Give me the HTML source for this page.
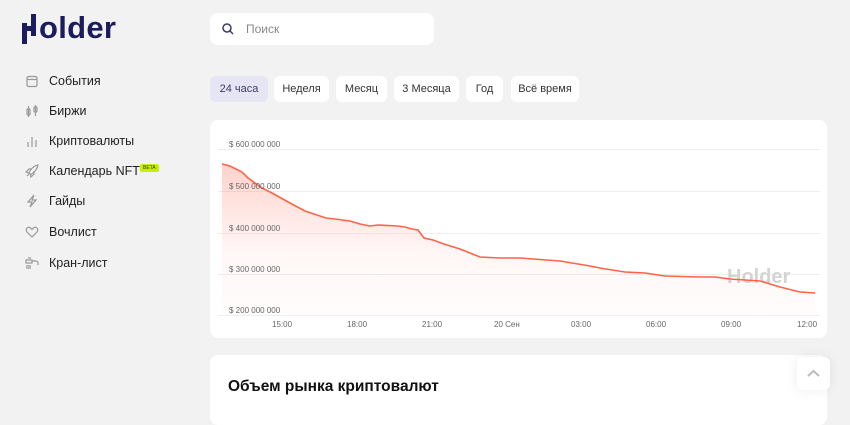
<!DOCTYPE html>
<html><head><meta charset="utf-8"><style>
body{margin:0;width:850px;height:413px;background:#f2f2f2;font-family:"Liberation Sans",sans-serif;overflow:hidden;position:relative}
.abs{position:absolute}
.logo{left:22px;top:12px;height:34px;color:#1b1b5e;font-weight:bold;font-size:31px;letter-spacing:0.3px}
.nav{left:25px;font-size:12.5px;color:#222}
.nav span.i{position:absolute;left:0;top:0;width:14px;height:14px}
.nav span.t{position:absolute;left:24px;top:0;white-space:nowrap}
.search{left:210px;top:13px;width:224px;height:32px;background:#fff;border-radius:8px}
.tab{top:76px;height:26px;background:#fff;border-radius:6px;font-size:11px;color:#333;text-align:center;line-height:26px}
.card{left:210px;top:120px;width:617px;height:218px;background:#fff;border-radius:8px}
.card2{left:210px;top:355px;width:617px;height:70px;background:#fff;border-radius:8px}
.yl{font-size:8px;color:#666;left:229px}
.xl{font-size:8px;color:#666;top:320px}
</style></head><body>
<div class="abs logo">
<svg width="16" height="32" style="position:absolute;left:0;top:2px"><rect x="0" y="9" width="5" height="21" fill="#1b1b5e"/><rect x="9" y="0" width="5" height="22" fill="#1b1b5e"/><rect x="0" y="12" width="14" height="5" fill="#1b1b5e"/></svg>
<span style="position:absolute;left:17px;top:-2px">older</span></div>

<div class="abs nav" style="top:74px"><span class="i"><svg width="14" height="14" fill="none" stroke="#999" stroke-width="1.2"><rect x="2" y="2.5" width="10" height="10" rx="1.5"/><line x1="2" y1="5.5" x2="12" y2="5.5"/></svg></span><span class="t">События</span></div>
<div class="abs nav" style="top:104px"><span class="i"><svg width="14" height="14" fill="none" stroke="#999" stroke-width="1.2"><rect x="2" y="5" width="3" height="6" rx="1"/><rect x="9" y="3" width="3" height="5" rx="1"/><line x1="3.5" y1="2" x2="3.5" y2="13"/><line x1="10.5" y1="1" x2="10.5" y2="12"/></svg></span><span class="t">Биржи</span></div>
<div class="abs nav" style="top:134px"><span class="i"><svg width="14" height="14" stroke="#999" stroke-width="1.2"><line x1="3" y1="8" x2="3" y2="13"/><line x1="7" y1="3" x2="7" y2="13"/><line x1="11" y1="6" x2="11" y2="13"/></svg></span><span class="t">Криптовалюты</span></div>
<div class="abs nav" style="top:164px"><span class="i"><svg width="14" height="14" fill="none" stroke="#999" stroke-width="1.2"><path d="M13 1C8 2 5 6 4 9l1.5 1.5C8 9.5 12 6 13 1z"/><path d="M4 9L1 8l3-3h3M5.5 10.5L6 13l3-3V7"/><path d="M2 12l2-2"/></svg></span><span class="t">Календарь NFT</span>
<span style="position:absolute;left:115px;top:0;background:#c6f000;font-size:5px;padding:1px 3px;border-radius:2px;color:#333">BETA</span></div>
<div class="abs nav" style="top:194px"><span class="i"><svg width="14" height="14" fill="none" stroke="#999" stroke-width="1.2"><path d="M9 1L3 8h4l-2 5 6-7H7z"/></svg></span><span class="t">Гайды</span></div>
<div class="abs nav" style="top:225px"><span class="i"><svg width="14" height="14" fill="none" stroke="#999" stroke-width="1.2"><path d="M7 12L2 7C0 4 3 1 5.5 3L7 4.5 8.5 3C11 1 14 4 12 7z"/></svg></span><span class="t">Вочлист</span></div>
<div class="abs nav" style="top:256px"><span class="i"><svg width="14" height="14" fill="none" stroke="#999" stroke-width="1.2"><path d="M1 4h6v3H1zM7 5h4a2 2 0 0 1 2 2v2M3 2h3M1 10h5M1 12h5"/></svg></span><span class="t">Кран-лист</span></div>

<div class="abs search"><svg class="abs" style="left:12px;top:10px" width="12" height="12" fill="none" stroke="#3a3a6a" stroke-width="1.5"><circle cx="5" cy="5" r="4"/><line x1="8" y1="8" x2="11" y2="11"/></svg><span class="abs" style="left:36px;top:9px;font-size:12px;color:#888">Поиск</span></div>

<div class="abs tab" style="left:210px;width:58px;background:#e6e5f3;color:#3c3c6a">24 часа</div>
<div class="abs tab" style="left:274px;width:55px">Неделя</div>
<div class="abs tab" style="left:336px;width:51px">Месяц</div>
<div class="abs tab" style="left:394px;width:65px">3 Месяца</div>
<div class="abs tab" style="left:466px;width:37px">Год</div>
<div class="abs tab" style="left:511px;width:68px">Всё время</div>

<div class="abs card"></div>
<svg class="abs" style="left:0;top:0" width="850" height="413">
<defs><linearGradient id="g" x1="0" y1="0" x2="0" y2="1"><stop offset="0" stop-color="#ff6b55" stop-opacity=".3"/><stop offset=".6" stop-color="#ff6b55" stop-opacity=".05"/><stop offset="1" stop-color="#ff6b55" stop-opacity=".02"/></linearGradient></defs>
<g stroke="#eee" stroke-width="1"><line x1="218" y1="149.5" x2="820" y2="149.5"/><line x1="218" y1="191.5" x2="820" y2="191.5"/><line x1="218" y1="233.5" x2="820" y2="233.5"/><line x1="218" y1="274.5" x2="820" y2="274.5"/><line x1="218" y1="315.5" x2="820" y2="315.5"/></g>
<text x="727" y="283" font-family="Liberation Sans" font-weight="bold" font-size="20" fill="#d4d4d4">Holder</text>
<path d="M222 164L230 166L242 172L248 178L262 188L272 193L290 203L305 211L326 218L335 219L350 221L360 224L370 226L378 225L398 226L405 227L412 229L418 230L424 238L433 240L444 244L460 249L480 257L500 258L520 258L560 261L590 266L600 268L625 272L645 273L665 276L700 277L715 277L730 279L760 281L780 287L800 292L815 293L815 315L222 315Z" fill="url(#g)"/>
<path d="M222 164L230 166L242 172L248 178L262 188L272 193L290 203L305 211L326 218L335 219L350 221L360 224L370 226L378 225L398 226L405 227L412 229L418 230L424 238L433 240L444 244L460 249L480 257L500 258L520 258L560 261L590 266L600 268L625 272L645 273L665 276L700 277L715 277L730 279L760 281L780 287L800 292L815 293" fill="none" stroke="#ff6347" stroke-width="1.6"/>
</svg>
<div class="abs yl" style="top:140px">$ 600 000 000</div>
<div class="abs yl" style="top:182px">$ 500 000 000</div>
<div class="abs yl" style="top:224px">$ 400 000 000</div>
<div class="abs yl" style="top:265px">$ 300 000 000</div>
<div class="abs yl" style="top:306px">$ 200 000 000</div>
<div class="abs xl" style="left:272px">15:00</div>
<div class="abs xl" style="left:347px">18:00</div>
<div class="abs xl" style="left:422px">21:00</div>
<div class="abs xl" style="left:494px">20 Сен</div>
<div class="abs xl" style="left:571px">03:00</div>
<div class="abs xl" style="left:646px">06:00</div>
<div class="abs xl" style="left:721px">09:00</div>
<div class="abs xl" style="left:797px">12:00</div>

<div class="abs card2"></div>
<div class="abs" style="left:228px;top:378px;font-size:15.5px;font-weight:bold;color:#111">Объем рынка криптовалют</div>
<div class="abs" style="left:797px;top:357px;width:33px;height:33px;background:#fff;border-radius:6px;box-shadow:0 0 12px rgba(0,0,0,.08)"><svg width="33" height="33" fill="none" stroke="#bbb" stroke-width="2"><path d="M11 19l5.5-5 5.5 5"/></svg></div>
</body></html>
